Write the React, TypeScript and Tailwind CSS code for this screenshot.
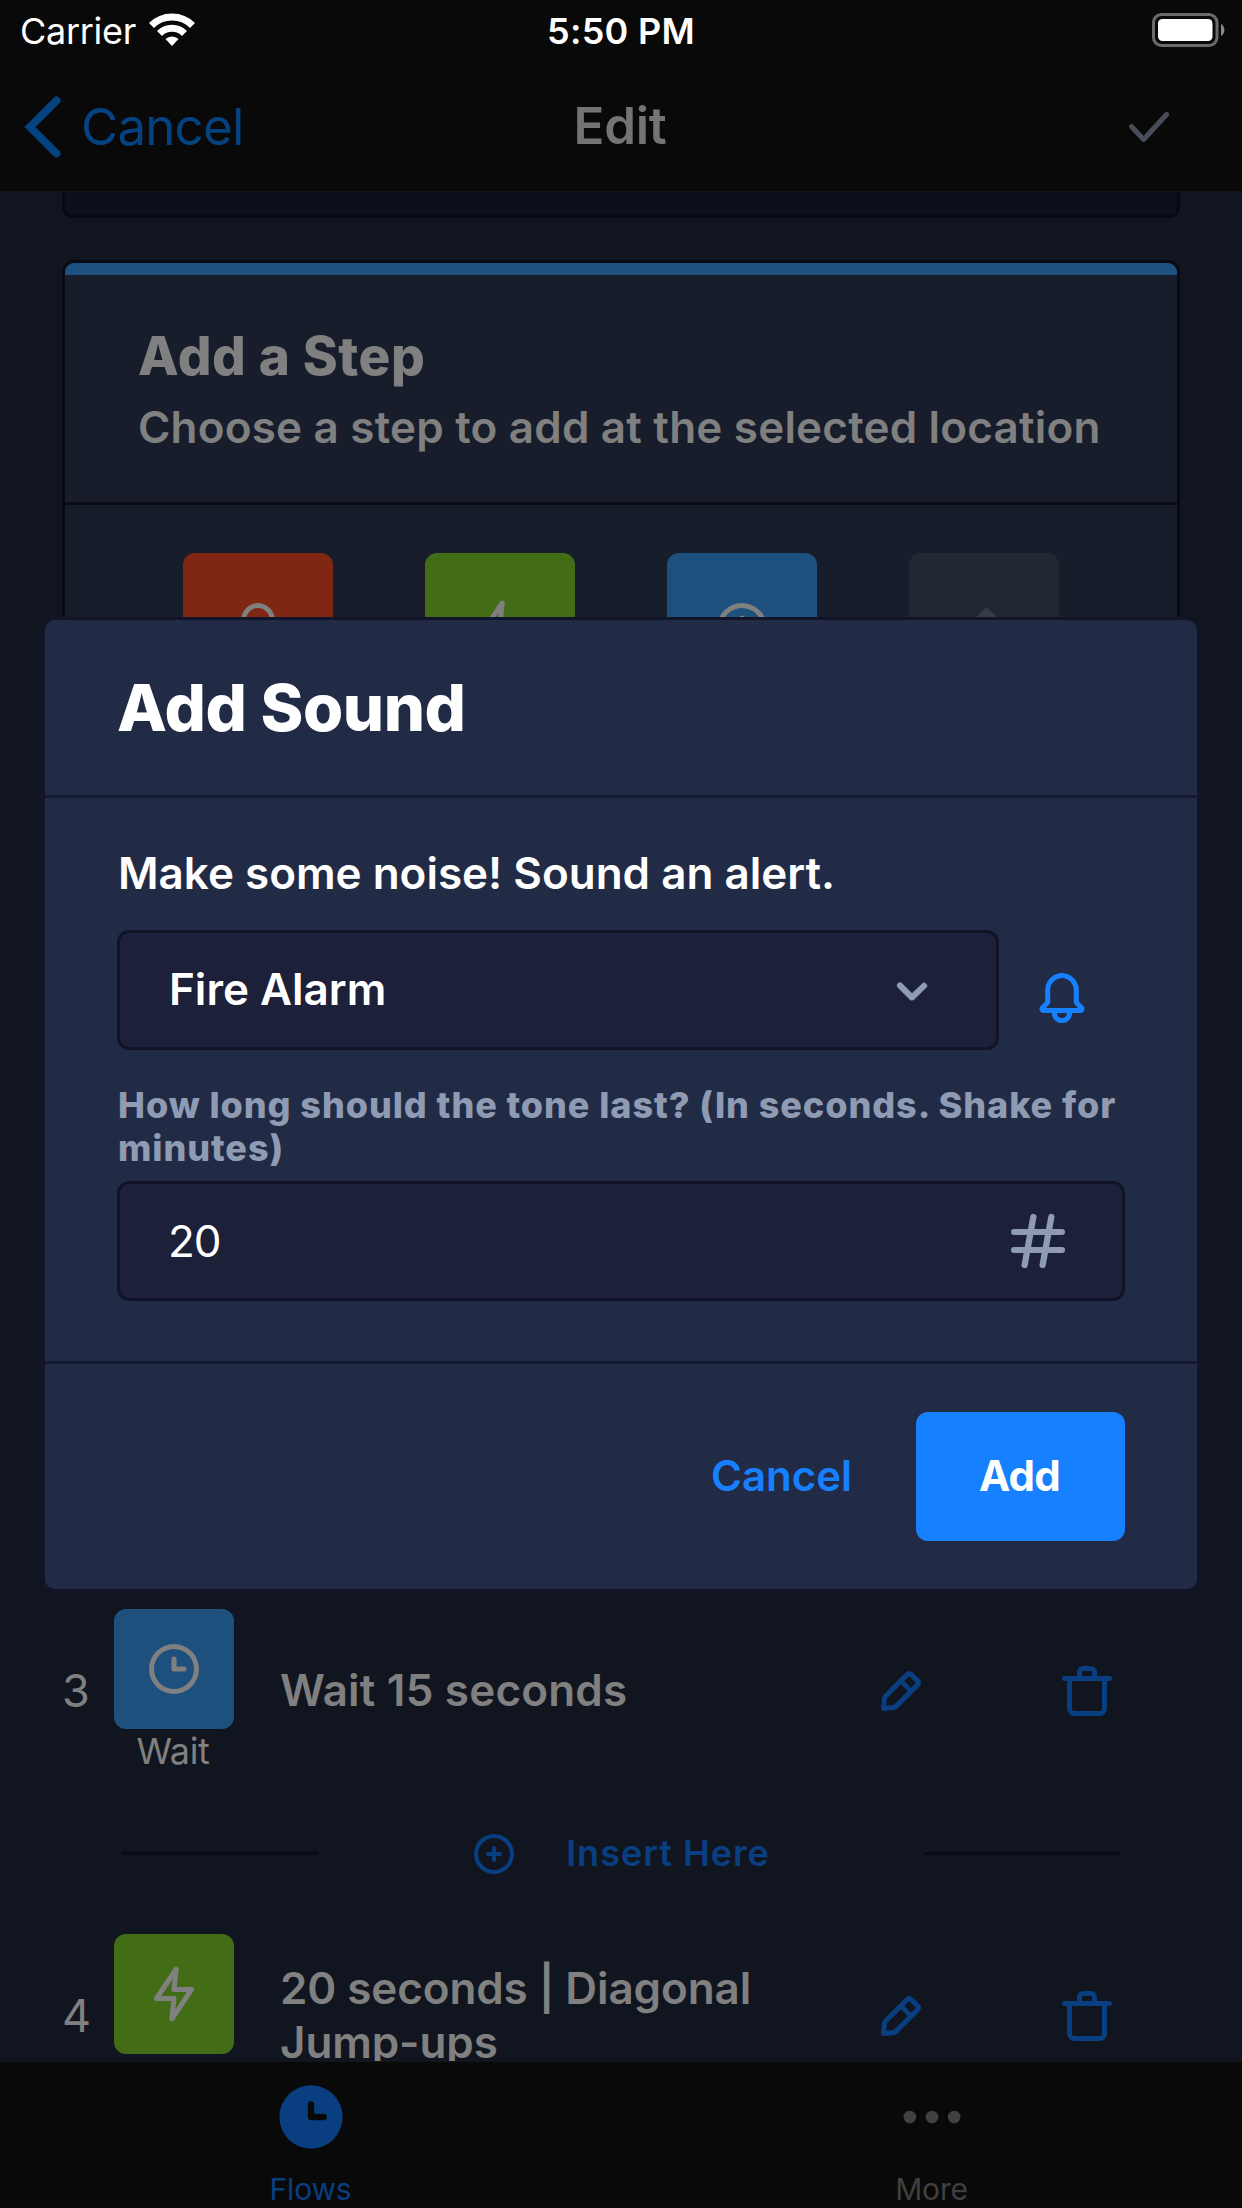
import type { ReactNode } from 'react';

const ICONS = {
  clock:
    'M12 2a10 10 0 1 0 10 10A10 10 0 0 0 12 2zm0 18a8 8 0 1 1 8-8 8 8 0 0 1-8 8zM16 11h-3V8a1 1 0 0 0-2 0v4a1 1 0 0 0 1 1h4a1 1 0 0 0 0-2z',
  clockFill:
    'M12 2a10 10 0 1 0 10 10A10 10 0 0 0 12 2zm4 11h-4a1 1 0 0 1-1-1V8a1 1 0 0 1 2 0v3h3a1 1 0 0 1 0 2z',
  plusCircle:
    'M12 2a10 10 0 1 0 10 10A10 10 0 0 0 12 2zm0 18a8 8 0 1 1 8-8 8 8 0 0 1-8 8zM15 11h-2V9a1 1 0 0 0-2 0v2H9a1 1 0 0 0 0 2h2v2a1 1 0 0 0 2 0v-2h2a1 1 0 0 0 0-2z',
  flash:
    'M11.11 23a1 1 0 0 1-.34-.06 1 1 0 0 1-.65-1.05l.77-7.09H5a1 1 0 0 1-.83-1.56l7.89-11.8a1 1 0 0 1 1.17-.38 1 1 0 0 1 .65 1l-.77 7.14H19a1 1 0 0 1 .83 1.56l-7.89 11.8a1 1 0 0 1-.83.44zM6.87 12.8H12a1 1 0 0 1 .74.33 1 1 0 0 1 .25.78l-.45 4.15 4.59-6.86H12a1 1 0 0 1-1-1.11l.45-4.15z',
  edit:
    'M19.4 7.34L16.66 4.6A2 2 0 0 0 14 4.53l-9 9a2 2 0 0 0-.57 1.21L4 18.91a1 1 0 0 0 .29.8A1 1 0 0 0 5 20h.09l4.17-.38a2 2 0 0 0 1.21-.57l9-9a1.92 1.92 0 0 0-.07-2.71zM9.08 17.62l-3 .28.27-3L12 9.32l2.7 2.7zM16 10.68L13.32 8l1.95-2L18 8.73z',
  trash:
    'M21 6h-5V4.33A2.42 2.42 0 0 0 13.5 2h-3A2.42 2.42 0 0 0 8 4.33V6H3a1 1 0 0 0 0 2h1v11a3 3 0 0 0 3 3h10a3 3 0 0 0 3-3V8h1a1 1 0 0 0 0-2zM10 4.33c0-.16.21-.33.5-.33h3c.29 0 .5.17.5.33V6h-4zM18 19a1 1 0 0 1-1 1H7a1 1 0 0 1-1-1V8h12z',
  bell:
    'M20.52 15.21l-1.8-1.81V8.94a6.86 6.86 0 0 0-5.82-6.88 6.74 6.74 0 0 0-7.62 6.67v4.67l-1.8 1.81A1.64 1.64 0 0 0 4.64 18H8v.34A3.84 3.84 0 0 0 12 22a3.84 3.84 0 0 0 4-3.66V18h3.36a1.64 1.64 0 0 0 1.16-2.79zM14 18.34A1.88 1.88 0 0 1 12 20a1.88 1.88 0 0 1-2-1.66V18h4zM5.51 16l1.18-1.18a2 2 0 0 0 .59-1.42V8.73A4.73 4.73 0 0 1 8.9 5.17 4.67 4.67 0 0 1 12.64 4a4.86 4.86 0 0 1 4.08 4.9v4.5a2 2 0 0 0 .58 1.42L18.49 16z',
  chevronDown:
    'M12 15.5a1 1 0 0 1-.71-.29l-4-4a1 1 0 1 1 1.42-1.42L12 13.1l3.3-3.18a1 1 0 1 1 1.38 1.44l-4 3.86a1 1 0 0 1-.68.28z',
  hash:
    'M20 14h-4.3l.73-4H20a1 1 0 0 0 0-2h-3.21l.69-3.81A1 1 0 0 0 16.64 3a1 1 0 0 0-1.22.82L14.67 8h-3.88l.69-3.81A1 1 0 0 0 10.64 3a1 1 0 0 0-1.22.82L8.67 8H4a1 1 0 0 0 0 2h4.3l-.73 4H4a1 1 0 0 0 0 2h3.21l-.69 3.81A1 1 0 0 0 7.36 21a1 1 0 0 0 1.22-.82L9.33 16h3.88l-.69 3.81a1 1 0 0 0 .84 1.19 1 1 0 0 0 1.22-.82l.75-4.18H20a1 1 0 0 0 0-2zM10.42 10h3.88l-.73 4H9.7z',
  check:
    'M9.86 18a1 1 0 0 1-.73-.32l-4.86-5.17a1 1 0 1 1 1.46-1.37l4.12 4.39 8.41-9.2a1 1 0 1 1 1.48 1.34l-9.14 10a1 1 0 0 1-.73.33z',
  more: 'M3 12a2 2 0 1 0 4 0a2 2 0 1 0-4 0zM10 12a2 2 0 1 0 4 0a2 2 0 1 0-4 0zM17 12a2 2 0 1 0 4 0a2 2 0 1 0-4 0z',
  up: 'M12.3 4.3a1 1 0 0 1 1.4 0l7.6 7.4-8.3 8-8.3-8z',
};

function Icon({ name, className }: { name: keyof typeof ICONS; className: string }) {
  return (
    <svg viewBox="0 0 24 24" fill="currentColor" className={`shrink-0 ${className}`}>
      <path d={ICONS[name]} />
    </svg>
  );
}

function StatusBar() {
  return (
    <div className="grid h-[62px] grid-cols-3 items-center pr-[17px] pl-5 text-[36px] leading-none text-white">
      <div className="flex items-center gap-[13px]">
        <span className="tracking-[-0.3px]">Carrier</span>
        <svg viewBox="0 0 46 34" className="mt-[-3px] h-[34px] w-[46px]" fill="none">
          <path d="M2.500 12.500a29 29 0 0 1 41 0" stroke="#fff" strokeWidth="7" />
          <path d="M10.500 20.500a17.700 17.700 0 0 1 25 0" stroke="#fff" strokeWidth="7" />
          <path d="M23 33l-6.500-7a9.500 9.500 0 0 1 13 0z" fill="#fff" />
        </svg>
      </div>
      <span className="mr-[3px] text-center font-semibold tracking-[0.3px]">5:50 PM</span>
      <svg viewBox="0 0 73 34" className="mt-[-2px] h-[34px] w-[73px] justify-self-end" fill="none">
        <rect x="1.500" y="1.500" width="63.500" height="31" rx="8" stroke="#6b6b6b" strokeWidth="3" />
        <rect x="6" y="6" width="54.500" height="22" rx="4.500" fill="#fff" />
        <path d="M69 11a7 7 0 0 1 0 12z" fill="#8a8a8a" />
      </svg>
    </div>
  );
}

function NavBar() {
  return (
    <div className="flex h-[129px] items-center pr-[63px] pl-[23px] text-[51px] leading-none">
      <div className="flex w-[480px] items-center gap-[20px] text-[#054280]">
        <svg viewBox="0 0 38 62" className="h-[62px] w-[38px]" fill="none">
          <path d="M33.500 4.500L7 31l26.500 26.500" stroke="currentColor" strokeWidth="8" strokeLinecap="round" />
        </svg>
        <span className="tracking-[-0.8px]">Cancel</span>
      </div>
      <span className="mt-[-2px] w-[234px] text-center font-semibold tracking-[-0.3px] text-[#747474]">Edit</span>
      <Icon name="check" className="ml-auto size-[60px] text-[#484d59]" />
    </div>
  );
}

function Tile({ color, children }: { color: string; children: ReactNode }) {
  return <div className={`flex h-[150px] w-[150px] justify-center rounded-[12px] pt-[45px] ${color}`}>{children}</div>;
}

function StepCard() {
  return (
    <section className="mt-[42px] h-[1200px] overflow-hidden rounded-[12px] border-[3px] border-[#080a13] bg-[#181d2c]">
      <div className="h-3 bg-[#1e507e]" />
      <header className="flex h-[230px] flex-col border-b-[3px] border-[#0a0b17] pt-[51px] pl-[73px] whitespace-nowrap text-[#808080]">
        <h2 className="text-[53px] leading-[60px] font-extrabold tracking-[0.6px]">Add a Step</h2>
        <p className="mt-[14px] text-[44px] leading-[54px] font-semibold tracking-[0.2px]">
          Choose a step to add at the selected location
        </p>
      </header>
      <div className="mt-12 flex justify-between px-[118px] text-[#808080]">
        <Tile color="bg-[#7f2712]">
          <Icon name="bell" className="size-[60px]" />
        </Tile>
        <Tile color="bg-[#426d16]">
          <Icon name="flash" className="size-[60px]" />
        </Tile>
        <Tile color="bg-[#1e507e]">
          <Icon name="clock" className="size-[60px]" />
        </Tile>
        <Tile color="bg-[#222734]">
          <Icon name="up" className="size-[60px] text-[#383c48]" />
        </Tile>
      </div>
    </section>
  );
}

function StepRow({
  index,
  icon,
  color,
  label,
  children,
}: {
  index: number;
  icon: 'clock' | 'flash';
  color: string;
  label?: string;
  children: ReactNode;
}) {
  return (
    <div className="flex h-[164px] items-center text-[#808080]">
      <span className="mt-[-2px] w-[52px] text-[45px] leading-none">{index}</span>
      <div className="flex w-[120px] shrink-0 flex-col items-center">
        <div className={`flex size-[120px] items-center justify-center rounded-[12px] ${color}`}>
          <Icon name={icon} className="size-[60px]" />
        </div>
        <span className="mr-[2px] h-[44px] text-[36px] leading-[44px] tracking-[-0.4px]">{label}</span>
      </div>
      <div className="mt-[-2px] ml-[46px] w-[591px] text-[44px] leading-[54px] font-semibold">{children}</div>
      <Icon name="edit" className="size-[60px] text-[#093f80]" />
      <Icon name="trash" className="ml-[126px] size-[60px] text-[#093f80]" />
    </div>
  );
}

function Modal() {
  return (
    <div className="absolute top-[617px] left-[42px] flex h-[975px] w-[1158px] flex-col rounded-[13px] border-[3px] border-[#111527] bg-[#222b45] text-white">
      <header className="flex h-[178px] shrink-0 items-center border-b-[3px] border-[#151a30] pl-[72px]">
        <h1 className="text-[65px] leading-none font-extrabold tracking-[-0.4px]">Add Sound</h1>
      </header>
      <div className="flex h-[566px] shrink-0 flex-col border-b-[3px] border-[#151a30] px-[72px] pt-[48px]">
        <p className="ml-px text-[44px] leading-[54px] font-semibold">Make some noise! Sound an alert.</p>
        <div className="mt-[30px] flex items-center">
          <div className="flex h-[120px] w-[882px] items-center justify-between rounded-[12px] border-[3px] border-[#101426] bg-[#1c2039] px-[48px]">
            <span className="mt-[-2px] ml-px text-[44px] leading-none font-semibold">Fire Alarm</span>
            <Icon name="chevronDown" className="size-[72px] text-[#8f9bb3]" />
          </div>
          <Icon name="bell" className="mt-[16px] ml-[33px] size-[60px] text-[#1780ff]" />
        </div>
        <label className="mt-[34px] ml-px text-[36px] leading-[43px] font-extrabold tracking-[0.93px] whitespace-nowrap text-[#8f9bb3]">
          How long should the tone last? (In seconds. Shake for
          <br />
          minutes)
        </label>
        <div className="mt-[11px] flex h-[120px] items-center justify-between rounded-[12px] border-[3px] border-[#101426] bg-[#1c2039] px-[48px]">
          <span className="text-[44px] leading-none tracking-[-1.2px]">20</span>
          <Icon name="hash" className="size-[72px] text-[#8f9bb3]" />
        </div>
      </div>
      <footer className="flex grow items-center justify-end pr-[72px] text-[42px] font-semibold">
        <span className="mt-[-2px] mr-[64px] text-[#1780ff]">Cancel</span>
        <span className="flex h-[129px] w-[209px] items-center justify-center rounded-[12px] bg-[#1780ff] pr-[2px] pb-[2px] font-bold tracking-[-0.7px]">
          Add
        </span>
      </footer>
    </div>
  );
}

export default function App() {
  return (
    <div className="relative flex h-[2208px] w-[1242px] flex-col overflow-hidden bg-[#11151f] font-['Inter',sans-serif]">
      <header className="h-[192px] shrink-0 border-b border-[#141516] bg-[#090909]">
        <StatusBar />
        <NavBar />
      </header>

      <main className="h-[1869px] shrink-0 overflow-hidden px-[62px]">
        <div className="h-[26px] rounded-b-[10px] border-[3px] border-t-0 border-[#080a13] bg-[#0d0f1a]" />
        <StepCard />
        <div className="mt-[149px]">
          <StepRow index={3} icon="clock" color="bg-[#1e507e]" label="Wait">
            <span className="tracking-[0.2px]">Wait 15 seconds</span>
          </StepRow>
          <div className="flex h-[161px] items-center justify-between px-[60px] text-[#093f80]">
            <div className="h-[3px] w-[196px] bg-[#0a0b17]" />
            <div className="mr-[2px] flex items-center gap-[48px]">
              <Icon name="plusCircle" className="size-[48px]" />
              <span className="mt-[-2px] text-[36px] leading-none font-semibold tracking-[1px]">Insert Here</span>
            </div>
            <div className="h-[3px] w-[196px] bg-[#0a0b17]" />
          </div>
          <StepRow index={4} icon="flash" color="bg-[#426d16]">
            <span className="tracking-[-0.1px]">
              20 seconds | Diagonal
              <br />
              Jump-ups
            </span>
          </StepRow>
        </div>
      </main>

      <nav className="flex h-[147px] shrink-0 border-t border-[#141516] bg-[#090909] text-[30px]">
        <div className="flex flex-1 flex-col items-center pt-[17px] text-[#093f80]">
          <Icon name="clockFill" className="ml-px size-[76px]" />
          <span className="mt-[16px] leading-[36px] tracking-[-0.2px]">Flows</span>
        </div>
        <div className="flex flex-1 flex-col items-center pt-[17px] text-[#404040]">
          <Icon name="more" className="ml-px size-[76px]" />
          <span className="mt-[16px] leading-[36px] tracking-[-0.2px]">More</span>
        </div>
      </nav>

      <Modal />
    </div>
  );
}
